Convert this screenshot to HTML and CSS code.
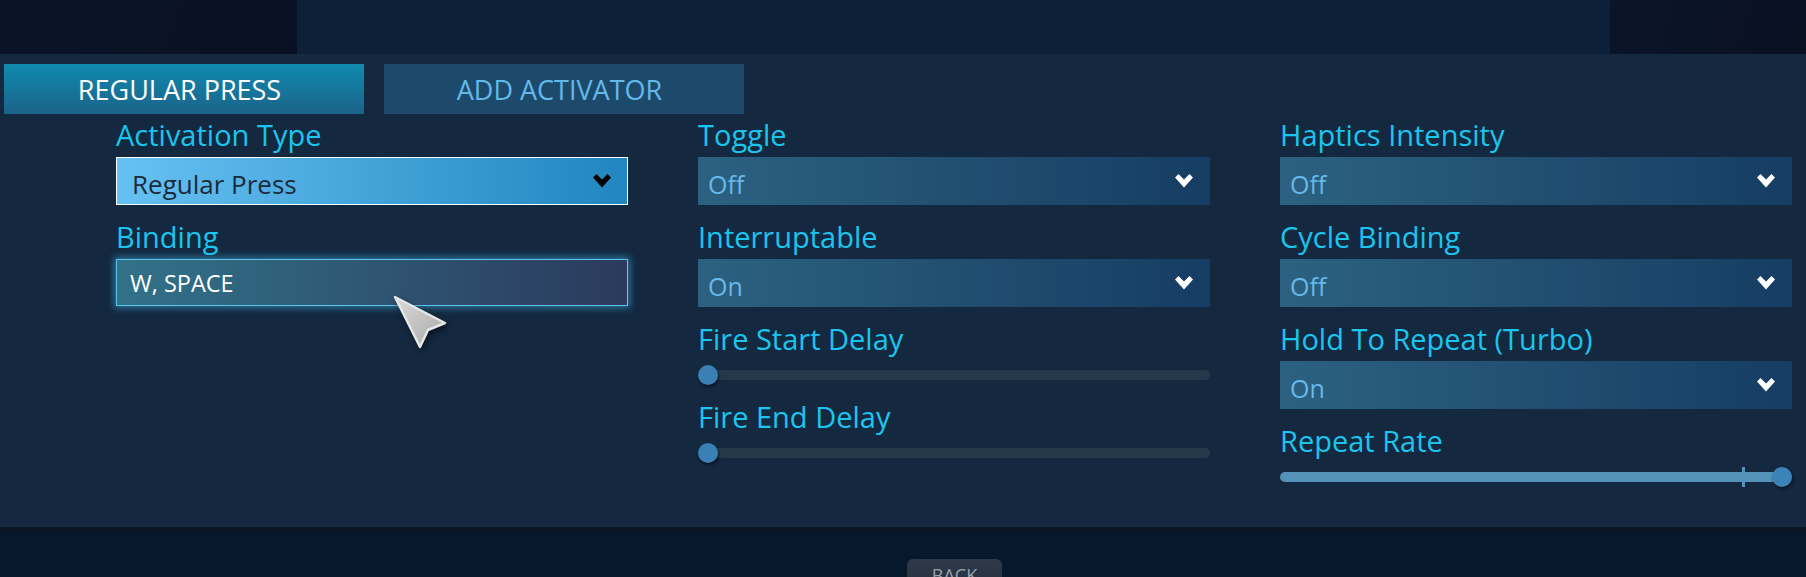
FILE: index.html
```html
<!DOCTYPE html>
<html lang="en">
<head>
<meta charset="utf-8">
<title>Activator Settings</title>
<link rel="stylesheet" href="styles.css">
</head>
<body>
<div class="app">
  <div class="topbar">
    <div class="tb-left"></div>
    <div class="tb-mid"></div>
    <div class="tb-right"></div>
  </div>

  <div class="main">
    <div class="tabs">
      <div class="tab active">REGULAR PRESS</div>
      <div class="tab idle">ADD ACTIVATOR</div>
    </div>

    <div class="grid">
      <div class="col">
        <div class="field">
          <div class="label">Activation Type</div>
          <div class="select primary">
            <span>Regular Press</span>
            <svg class="chev" viewBox="0 0 18 14" width="18" height="14"><path d="M0 3.5 L3.5 0 L9 5.5 L14.5 0 L18 3.5 L9 13.5 Z" fill="#000"/></svg>
          </div>
        </div>
        <div class="field">
          <div class="label">Binding</div>
          <div class="binding">W, SPACE</div>
        </div>
      </div>

      <div class="col">
        <div class="field">
          <div class="label">Toggle</div>
          <div class="select">
            <span>Off</span>
            <svg class="chev" viewBox="0 0 18 14" width="18" height="14"><path d="M0 3.5 L3.5 0 L9 5.5 L14.5 0 L18 3.5 L9 13.5 Z" fill="#fff"/></svg>
          </div>
        </div>
        <div class="field">
          <div class="label">Interruptable</div>
          <div class="select">
            <span>On</span>
            <svg class="chev" viewBox="0 0 18 14" width="18" height="14"><path d="M0 3.5 L3.5 0 L9 5.5 L14.5 0 L18 3.5 L9 13.5 Z" fill="#fff"/></svg>
          </div>
        </div>
        <div class="field slider-field">
          <div class="label">Fire Start Delay</div>
          <div class="slider">
            <div class="track"></div>
            <div class="knob"></div>
          </div>
        </div>
        <div class="field slider-field">
          <div class="label">Fire End Delay</div>
          <div class="slider">
            <div class="track"></div>
            <div class="knob"></div>
          </div>
        </div>
      </div>

      <div class="col">
        <div class="field">
          <div class="label">Haptics Intensity</div>
          <div class="select">
            <span>Off</span>
            <svg class="chev" viewBox="0 0 18 14" width="18" height="14"><path d="M0 3.5 L3.5 0 L9 5.5 L14.5 0 L18 3.5 L9 13.5 Z" fill="#fff"/></svg>
          </div>
        </div>
        <div class="field">
          <div class="label">Cycle Binding</div>
          <div class="select">
            <span>Off</span>
            <svg class="chev" viewBox="0 0 18 14" width="18" height="14"><path d="M0 3.5 L3.5 0 L9 5.5 L14.5 0 L18 3.5 L9 13.5 Z" fill="#fff"/></svg>
          </div>
        </div>
        <div class="field">
          <div class="label">Hold To Repeat (Turbo)</div>
          <div class="select">
            <span>On</span>
            <svg class="chev" viewBox="0 0 18 14" width="18" height="14"><path d="M0 3.5 L3.5 0 L9 5.5 L14.5 0 L18 3.5 L9 13.5 Z" fill="#fff"/></svg>
          </div>
        </div>
        <div class="field slider-field">
          <div class="label">Repeat Rate</div>
          <div class="slider">
            <div class="track filled"></div>
            <div class="tick"></div>
            <div class="knob end"></div>
          </div>
        </div>
      </div>
    </div>
  </div>

  <div class="footer">
    <div class="back">BACK</div>
  </div>

  <svg class="cursor" viewBox="0 0 60 60" width="60" height="60">
    <defs>
      <linearGradient id="cg" x1="0" y1="0" x2="1" y2="1">
        <stop offset="0" stop-color="#d9d9d9"/>
        <stop offset="1" stop-color="#a9a9a9"/>
      </linearGradient>
    </defs>
    <polygon points="4,4 54,30 37,37 29,54" fill="url(#cg)" stroke="#e6e6e6" stroke-width="2.5" stroke-linejoin="round"/>
  </svg>
</div>
</body>
</html>
```

FILE: styles.css
```css
html, body {
  margin: 0;
  padding: 0;
  width: 1806px;
  height: 577px;
  overflow: hidden;
  background: #07172c;
  font-family: "Open Sans", "Noto Sans", sans-serif;
}

.app {
  position: relative;
  width: 1806px;
  height: 577px;
  display: flex;
  flex-direction: column;
  overflow: hidden;
}

/* top bar */
.topbar {
  flex: none;
  height: 54px;
  display: flex;
  background: #0c2138;
}
.tb-left {
  width: 297px;
  background: linear-gradient(110deg, #0a1428, #0a1024);
}
.tb-mid {
  flex: 1;
}
.tb-right {
  width: 196px;
  background: linear-gradient(110deg, #0a1529, #0b1023);
}

/* main panel */
.main {
  flex: none;
  height: 473px;
  background: #142840;
}

.tabs {
  display: flex;
  gap: 20px;
  padding: 10px 0 0 4px;
}
.tab {
  box-sizing: border-box;
  width: 360px;
  height: 50px;
  display: flex;
  align-items: center;
  justify-content: center;
  padding-right: 9px;
  font-size: 27px;
}
.tab.active {
  background: linear-gradient(to bottom, #1089b0, #1c6388);
  color: #ffffff;
}
.tab.idle {
  background: #1d4a6b;
  color: #62b9ec;
}

.grid {
  display: grid;
  grid-template-columns: repeat(3, 512px);
  column-gap: 70px;
  padding-left: 116px;
  margin-top: 3px;
  align-items: start;
}

.col {
  display: flex;
  flex-direction: column;
  gap: 14px;
}

.field {
  display: flex;
  flex-direction: column;
  gap: 5px;
}
.field.slider-field {
  gap: 9px;
}

.label {
  font-size: 29px;
  line-height: 35px;
  height: 35px;
  color: #1ac5ee;
  white-space: nowrap;
}

.select {
  box-sizing: border-box;
  height: 48px;
  display: flex;
  align-items: center;
  justify-content: space-between;
  padding: 5px 17px 0 10px;
  background: linear-gradient(to right, #2c6181, #163d63);
  color: #67b9e9;
  font-size: 25px;
}
.select .chev {
  margin-top: -5px;
}
.select.primary {
  background: linear-gradient(to right, #66c1f3, #2186bf);
  border: 1px solid #ffffff;
  color: #1b2b3b;
  padding-left: 15px;
  padding-right: 16px;
  font-size: 26px;
}
.chev {
  display: block;
  flex: none;
}

.binding {
  box-sizing: border-box;
  height: 47px;
  display: flex;
  align-items: center;
  padding-left: 13px;
  border: 1px solid #5cc6ee;
  box-shadow: 0 0 7px 2px rgba(64, 180, 230, 0.55);
  background: linear-gradient(to right, #327289, #2b3a5d);
  color: #ffffff;
  font-size: 23.5px;
}

/* sliders */
.slider {
  position: relative;
  height: 20px;
  display: flex;
  align-items: center;
}
.track {
  flex: 1;
  height: 10px;
  border-radius: 5px;
  background: #243a4a;
}
.track.filled {
  background: #5592ba;
}
.knob {
  position: absolute;
  top: 0;
  left: 0;
  width: 20px;
  height: 20px;
  border-radius: 50%;
  background: #3b80b4;
  box-shadow: 1px 2px 3px rgba(0, 0, 0, 0.55);
}
.knob.end {
  left: auto;
  right: 0;
  background: #3b83b8;
}
.tick {
  position: absolute;
  left: 462px;
  top: 0;
  width: 3px;
  height: 20px;
  background: #5592ba;
}

/* footer */
.footer {
  flex: 1 1 auto;
  min-height: 0;
  overflow: hidden;
  display: flex;
  align-items: flex-start;
  padding-left: 907px;
  background: linear-gradient(to bottom, #0f1a27 0px, #0a1522 3px, #07172c 7px, #07172c 100%);
}
.back {
  flex: none;
  margin-top: 32px;
  width: 95px;
  height: 40px;
  box-sizing: border-box;
  padding-top: 4px;
  border-radius: 6px 6px 0 0;
  background: linear-gradient(to bottom, #2e3a4a, #232d3b);
  color: #98a2ad;
  font-size: 18px;
  line-height: 25px;
  text-align: center;
}

/* mouse pointer overlay */
.cursor {
  position: absolute;
  left: 391px;
  top: 293px;
  filter: drop-shadow(2px 3px 3px rgba(0, 0, 0, 0.5));
}
```
